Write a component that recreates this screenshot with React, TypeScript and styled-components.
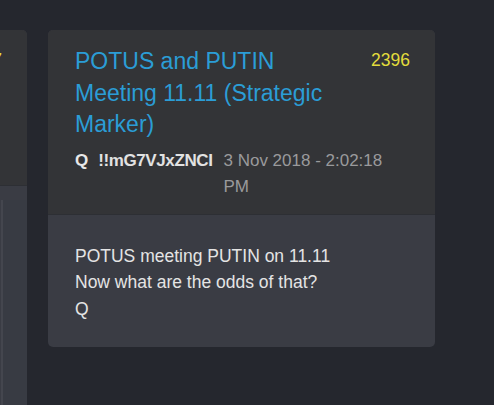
import styled, { createGlobalStyle } from "styled-components";

const GlobalStyle = createGlobalStyle`
  html, body {
    margin: 0;
    padding: 0;
    background: #25272e;
    font-family: "Liberation Sans", Arial, Helvetica, sans-serif;
    overflow: hidden;
  }
`;

type Post = {
  num: number;
  title?: string;
  name?: string;
  trip?: string;
  date?: string;
  lines: string[];
};

// the left card is the neighbouring post, scrolled almost out of view
const posts: Post[] = [
  {
    num: 2397,
    lines: [],
  },
  {
    num: 2396,
    title: "POTUS and PUTIN Meeting 11.11 (Strategic Marker)",
    name: "Q",
    trip: "!!mG7VJxZNCI",
    date: "3 Nov 2018 - 2:02:18 PM",
    lines: ["POTUS meeting PUTIN on 11.11", "Now what are the odds of that?", "Q"],
  },
];

export default function App() {
  return (
    <>
      <GlobalStyle />
      <Viewport>
        <Track>
          {posts.map((p, i) => (
            <Card key={p.num} $first={i === 0}>
              <Header $first={i === 0}>
                <TitleRow>
                  <Title>{p.title}</Title>
                  <Num>{p.num}</Num>
                </TitleRow>
                {p.name && (
                  <Meta>
                    <Name>{p.name}</Name>
                    <Trip>{p.trip}</Trip>
                    <Stamp>{p.date}</Stamp>
                  </Meta>
                )}
              </Header>
              <Body $first={i === 0}>
                {p.lines.map((l, j) => (
                  <Line key={j}>{l}</Line>
                ))}
                {i === 0 && <Attachment />}
              </Body>
            </Card>
          ))}
        </Track>
      </Viewport>
    </>
  );
}

const Viewport = styled.div`
  width: 494px;
  height: 405px;
  overflow: hidden;
`;

const Track = styled.div`
  display: flex;
  align-items: flex-start;
  gap: 21px;
  padding-top: 30px;
  margin-left: -360px;
`;

const Card = styled.div<{ $first?: boolean }>`
  flex: 0 0 387px;
  border-radius: 5px;
  overflow: hidden;
  background: #3a3c44;
  display: flex;
  flex-direction: column;
  min-height: ${(p) => (p.$first ? "420px" : "auto")};
`;

const Header = styled.div<{ $first?: boolean }>`
  background: #333437;
  padding: 16px 25px 14px 27px;
  border-bottom: 1px solid #2d2f34;
  box-sizing: border-box;
  height: ${(p) => (p.$first ? "156px" : "auto")};
`;

const TitleRow = styled.div`
  display: flex;
  align-items: flex-start;
  justify-content: space-between;
  gap: 14px;
`;

const Title = styled.div`
  color: #2b9dd6;
  font-size: 23px;
  line-height: 31.5px;
  max-width: 290px;
`;

const Num = styled.div`
  color: #e3dc3c;
  font-size: 17.5px;
  line-height: 20px;
  padding-top: 4px;
`;

const Meta = styled.div`
  display: flex;
  align-items: flex-start;
  margin-top: 7px;
  font-size: 17px;
  line-height: 26px;
`;

const Name = styled.span`
  color: #e8e8e8;
  font-weight: bold;
  margin-right: 10px;
`;

const Trip = styled.span`
  color: #e2e2e2;
  font-weight: bold;
  letter-spacing: -0.4px;
  margin-right: 11px;
  white-space: nowrap;
`;

const Stamp = styled.span`
  color: #9a9a9c;
  flex: 1;
`;

const Body = styled.div<{ $first?: boolean }>`
  flex: 1;
  padding: ${(p) => (p.$first ? "14px 0 0 360px" : "28px 27px 25px")};
  color: #e4e4e4;
  font-size: 17.5px;
  line-height: 26.5px;
`;

const Line = styled.div``;

const Attachment = styled.div`
  height: 260px;
  border-left: 2px solid #44464e;
  background: #383b43;
  margin-left: 1px;
`;
